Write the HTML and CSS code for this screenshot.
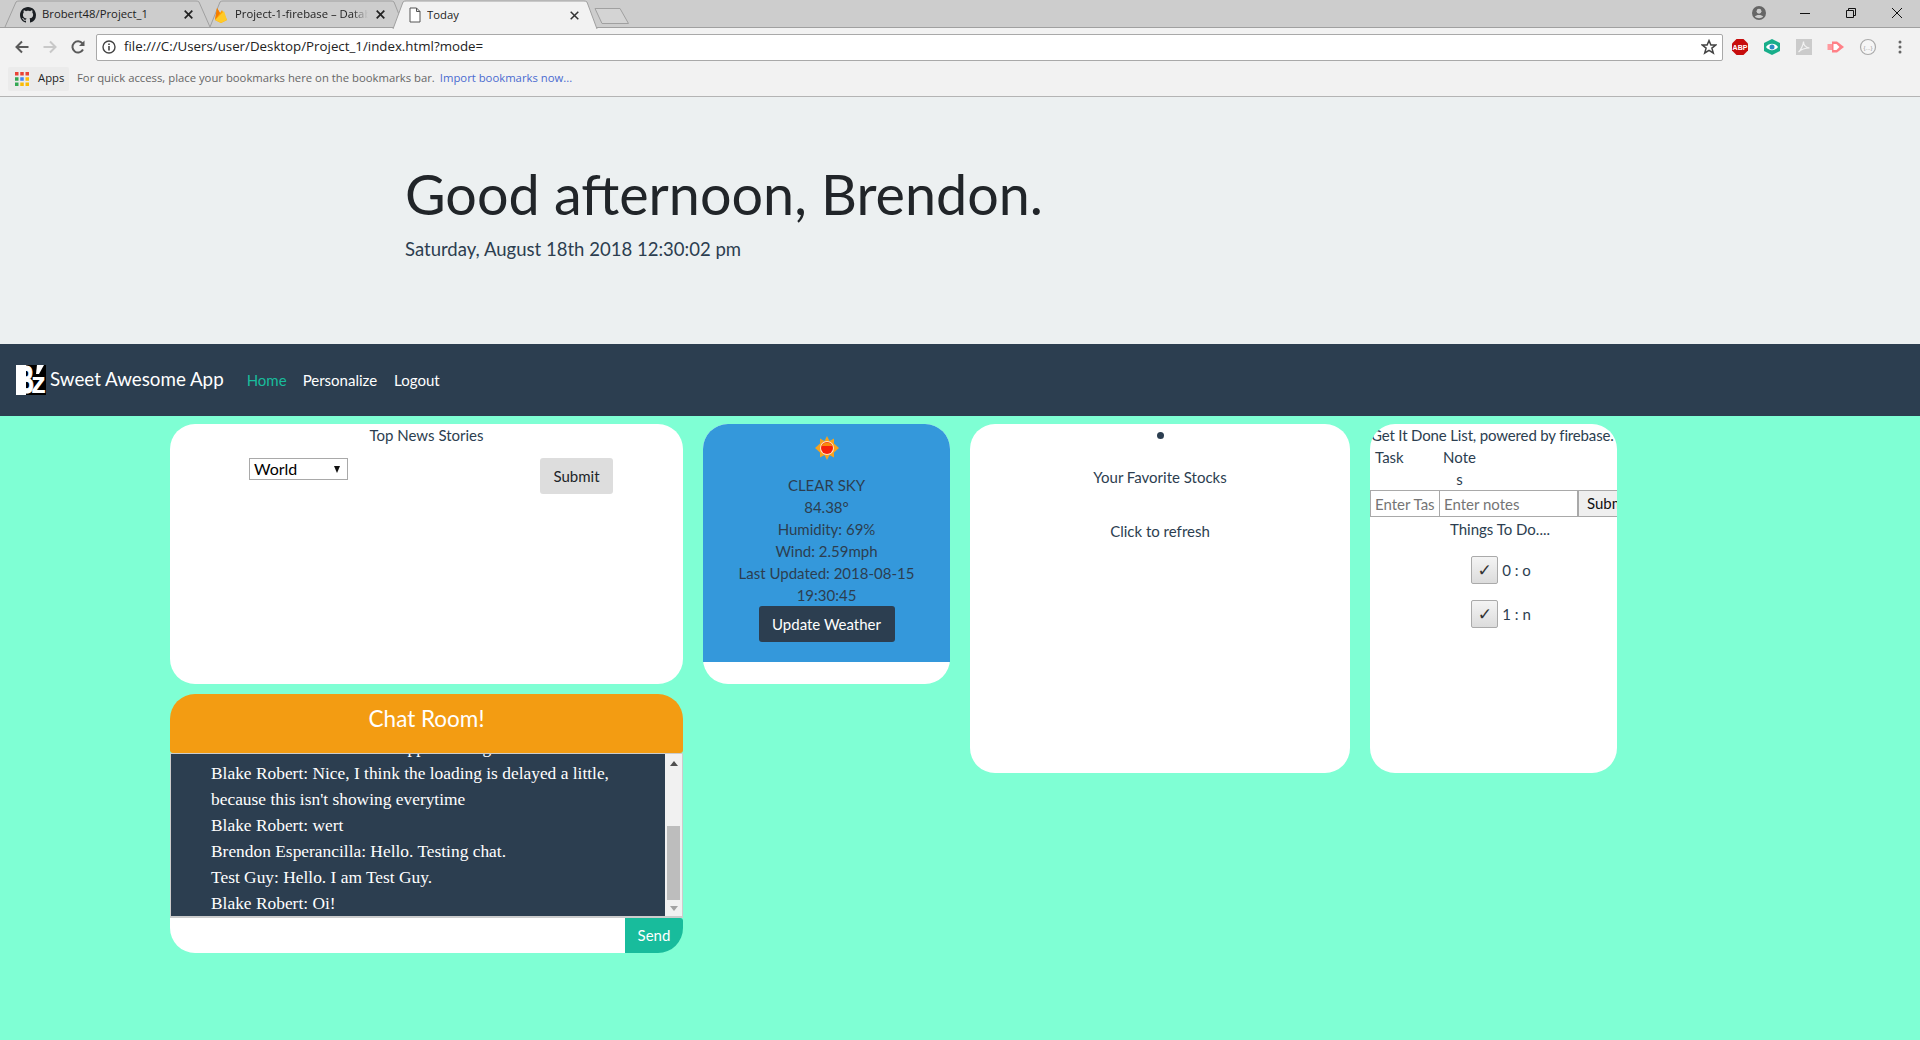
FILE: index.html
```html
<!DOCTYPE html>
<html lang="en">
<head>
  <meta charset="UTF-8">
  <meta name="viewport" content="width=device-width, initial-scale=1.0">
  <title>Today</title>
  <link rel="stylesheet" href="styles.css">
</head>
<body>
  <!-- browser chrome -->
  <div class="tabstrip">
    <div class="tab tab-first">
      <svg class="tab-shape" viewBox="0 0 205 28" preserveAspectRatio="none"><path d="M0 27 L11 2 Q12 1 14 1 L191 1 Q193 1 194 2 L205 27" fill="#cdcdcd" stroke="#a0a0a0"/></svg>
      <svg class="favicon" viewBox="0 0 16 16" width="16" height="16"><path fill="#1b1f23" d="M8 0C3.58 0 0 3.58 0 8c0 3.54 2.29 6.53 5.47 7.59.4.07.55-.17.55-.38 0-.19-.01-.82-.01-1.49-2.01.37-2.53-.49-2.69-.94-.09-.23-.48-.94-.82-1.13-.28-.15-.68-.52-.01-.53.63-.01 1.08.58 1.23.82.72 1.21 1.87.87 2.33.66.07-.52.28-.87.51-1.07-1.78-.2-3.64-.89-3.64-3.95 0-.87.31-1.59.82-2.15-.08-.2-.36-1.02.08-2.12 0 0 .67-.21 2.2.82.64-.18 1.32-.27 2-.27.68 0 1.36.09 2 .27 1.53-1.04 2.2-.82 2.2-.82.44 1.1.16 1.92.08 2.12.51.56.82 1.27.82 2.15 0 3.07-1.87 3.75-3.65 3.95.29.25.54.73.54 1.48 0 1.07-.01 1.93-.01 2.2 0 .21.15.46.55.38A8.013 8.013 0 0016 8c0-4.42-3.58-8-8-8z"/></svg>
      <span class="tab-title">Brobert48/Project_1</span>
      <svg class="tab-close" viewBox="0 0 9 9" width="9" height="9"><path d="M.7 .7L8.300 8.300M8.300 .7L.7 8.300" stroke="#222" stroke-width="1.700"/></svg>
    </div>
    <div class="tab tab-second">
      <svg class="tab-shape" viewBox="0 0 194 28" preserveAspectRatio="none"><path d="M0 27 L10 2 Q11 1 13 1 L181 1 Q183 1 184 2 L194 27" fill="#cdcdcd" stroke="#a0a0a0"/></svg>
      <svg class="favicon" viewBox="0 0 12 16" width="12" height="16"><path fill="#ffa000" d="M0 13 L2 1 L5 6 L7 3 L12 13 L6 16z"/><path fill="#f57c00" d="M0 13 L2 1 L5 6z"/><path fill="#ffca28" d="M0 13 L9 4 L12 13 L6 16z"/></svg>
      <span class="tab-title tab-title-fade">Project-1-firebase – Database</span>
      <svg class="tab-close" viewBox="0 0 9 9" width="9" height="9"><path d="M.7 .7L8.300 8.300M8.300 .7L.7 8.300" stroke="#222" stroke-width="1.700"/></svg>
    </div>
    <div class="tab tab-active">
      <svg class="tab-shape" viewBox="0 0 204 29" preserveAspectRatio="none"><path d="M0 29 L10 2 Q11 1 13 1 L191 1 Q193 1 194 2 L204 29" fill="#f2f2f2" stroke="#a0a0a0"/></svg>
      <svg class="favicon" viewBox="0 0 12 16" width="12" height="16"><path d="M1 1 H7.500 L11 4.500 V15 H1z M7.500 1 V4.500 H11" fill="#fff" stroke="#555" stroke-width="1"/></svg>
      <span class="tab-title">Today</span>
      <svg class="tab-close" viewBox="0 0 9 9" width="9" height="9"><path d="M.7 .7L8.300 8.300M8.300 .7L.7 8.300" stroke="#333" stroke-width="1.500"/></svg>
    </div>
    <svg class="newtab" viewBox="0 0 36 18" width="36" height="18"><path d="M1 1.500 H26 L34.500 16.500 H8z" fill="#d4d4d4" stroke="#a0a0a0" stroke-linejoin="round"/></svg>
    <div class="window-controls">
      <svg class="win-user" viewBox="0 0 16 16" width="14" height="14"><circle cx="8" cy="8" r="8" fill="#666"/><circle cx="8" cy="6" r="2.800" fill="#ccc"/><path d="M3.200 12.400 C4.400 9.400 11.600 9.400 12.800 12.400 C10.500 14.400 5.500 14.400 3.200 12.400z" fill="#ccc"/></svg>
      <svg viewBox="0 0 10 10" width="10" height="10"><path d="M0 5.500H10" stroke="#111" stroke-width="1"/></svg>
      <svg viewBox="0 0 10 10" width="10" height="10"><path d="M.5 2.500H7.500V9.500H.5z M2.500 2.500V.5H9.500V7.500H7.500" fill="none" stroke="#111"/></svg>
      <svg viewBox="0 0 10 10" width="10" height="10"><path d="M0 0L10 10M10 0L0 10" stroke="#111"/></svg>
    </div>
  </div>

  <div class="toolbar">
    <svg class="nav-icon" viewBox="0 0 16 16" width="16" height="16"><path d="M14.500 8H2.500M8 2.500L2.500 8L8 13.500" fill="none" stroke="#5a5a5a" stroke-width="2"/></svg>
    <svg class="nav-icon" viewBox="0 0 16 16" width="16" height="16"><path d="M1.500 8H13.500M8 2.500L13.500 8L8 13.500" fill="none" stroke="#c8c8c8" stroke-width="2"/></svg>
    <svg class="nav-icon" viewBox="0 0 16 16" width="16" height="16"><path d="M13 10.500A5.600 5.600 0 1 1 12.400 4.400" fill="none" stroke="#5a5a5a" stroke-width="2"/><path d="M14.500 1.500V7H9z" fill="#5a5a5a"/></svg>
    <div class="urlbar">
      <svg viewBox="0 0 14 14" width="14" height="14"><circle cx="7" cy="7" r="6" fill="none" stroke="#444" stroke-width="1.400"/><path d="M7 6V10.500M7 3.400V5" stroke="#444" stroke-width="1.600"/></svg>
      <span class="url">file:///C:/Users/user/Desktop/Project_1/index.html?mode=</span>
      <svg class="star" viewBox="0 0 16 16" width="16" height="16"><path d="M8 1.600L9.900 6H14.800L10.900 9.100L12.300 14L8 11.300L3.700 14L5.100 9.100L1.200 6H6.100z" fill="none" stroke="#444" stroke-width="1.500"/></svg>
    </div>
    <div class="extensions">
      <svg viewBox="0 0 18 18" width="18" height="18"><path d="M5.500 1H12.500L17 5.500V12.500L12.500 17H5.500L1 12.500V5.500z" fill="#c70d0d"/><text x="9" y="12" class="abp-text" text-anchor="middle">ABP</text></svg>
      <svg viewBox="0 0 18 18" width="18" height="18"><path d="M9 1L17 5V13L9 17L1 13V5z" fill="#17ae8a"/><path d="M3 9C6 4.800 12 4.800 15 9C12 13.200 6 13.200 3 9z" fill="#fff"/><circle cx="9" cy="9" r="2.500" fill="#2b8cc4"/></svg>
      <svg viewBox="0 0 18 18" width="18" height="18"><rect x="1" y="1" width="16" height="16" fill="#cbcbcb"/><path d="M3.500 14C6 12 8.500 6 8.500 3.500C8.500 7 10.500 9.500 14.500 10C11 10 6 11.500 3.500 14z" fill="none" stroke="#f2f2f2" stroke-width="1.200"/></svg>
      <svg viewBox="0 0 18 18" width="18" height="18"><rect x="0.500" y="6" width="5" height="6" fill="#ff9a9f"/><path d="M5 3.500H10L17 9L10 14.500H5z" fill="#ff8087"/><path d="M6.500 6H9.500L12.500 9L9.500 12H6.500z" fill="#fff"/></svg>
      <svg viewBox="0 0 18 18" width="18" height="18"><circle cx="9" cy="9" r="7.500" fill="#f6f6f6" stroke="#aaa" stroke-width="1.200"/><text x="9" y="11.500" class="ext-text" text-anchor="middle">{...}</text></svg>
      <svg class="menu-dots" viewBox="0 0 4 14" width="4" height="14"><circle cx="2" cy="2" r="1.500" fill="#666"/><circle cx="2" cy="7" r="1.500" fill="#666"/><circle cx="2" cy="12" r="1.500" fill="#666"/></svg>
    </div>
  </div>

  <div class="bookmarks">
    <div class="apps">
      <svg viewBox="0 0 12 12" width="14" height="14"><rect x="0" y="0" width="3" height="3" fill="#ea4335"/><rect x="4.500" y="0" width="3" height="3" fill="#ea4335"/><rect x="9" y="0" width="3" height="3" fill="#ea4335"/><rect x="0" y="4.500" width="3" height="3" fill="#34a853"/><rect x="4.500" y="4.500" width="3" height="3" fill="#4285f4"/><rect x="9" y="4.500" width="3" height="3" fill="#fbbc05"/><rect x="0" y="9" width="3" height="3" fill="#34a853"/><rect x="4.500" y="9" width="3" height="3" fill="#fbbc05"/><rect x="9" y="9" width="3" height="3" fill="#fbbc05"/></svg>
      <span>Apps</span>
    </div>
    <span class="bm-hint">For quick access, place your bookmarks here on the bookmarks bar.</span>
    <a class="bm-link">Import bookmarks now...</a>
  </div>

  <!-- page -->
  <header class="jumbotron">
    <h1>Good afternoon, Brendon.</h1>
    <p class="lead">Saturday, August 18th 2018 12:30:02 pm</p>
  </header>

  <nav class="navbar">
    <svg class="logo" viewBox="0 0 30 30" width="30" height="30">
      <rect width="30" height="30" fill="#000"/>
      <rect width="10" height="30" fill="#fff"/>
      <text x="1" y="28" class="logo-b" textLength="17" lengthAdjust="spacingAndGlyphs">B</text>
      <text x="15" y="28" class="logo-z" textLength="15" lengthAdjust="spacingAndGlyphs">z</text>
      <path d="M21 0H28L23 9H20z" fill="#fff"/>
    </svg>
    <a class="brand">Sweet Awesome App</a>
    <a class="nav-link active">Home</a>
    <a class="nav-link nav-wide">Personalize</a>
    <a class="nav-link">Logout</a>
  </nav>

  <main class="content">
    <div class="left-col">
      <section class="card news">
        <div class="card-title">Top News Stories</div>
        <div class="news-form">
          <div class="select-box">World</div>
          <button class="btn-grey">Submit</button>
        </div>
      </section>

      <section class="chat">
        <div class="chat-head">Chat Room!</div>
        <div class="chat-body">
          <div class="chat-messages">
            <p>Blake Robert: Now it did happen during</p>
            <p>Blake Robert: Nice, I think the loading is delayed a little, because this isn't showing everytime</p>
            <p>Blake Robert: wert</p>
            <p>Brendon Esperancilla: Hello. Testing chat.</p>
            <p>Test Guy: Hello. I am Test Guy.</p>
            <p>Blake Robert: Oi!</p>
          </div>
          <div class="scrollbar">
            <span class="arrow-up"></span>
            <span class="thumb"></span>
            <span class="arrow-down"></span>
          </div>
        </div>
        <div class="chat-input">
          <div class="chat-field"></div>
          <button class="btn-send">Send</button>
        </div>
      </section>
    </div>

    <section class="card weather">
      <div class="weather-box">
        <svg class="sun" viewBox="0 0 24 24" width="24" height="24">
          <path d="M12 0L14.500 5L19 2.500L19 7.500L24 12L19 16.500L19 21.500L14.500 19L12 24L9.500 19L5 21.500L5 16.500L0 12L5 7.500L5 2.500L9.500 5z" fill="#f6a21e"/>
          <circle cx="12" cy="12" r="7" fill="#fde6c8"/>
          <circle cx="12" cy="12" r="6" fill="#f5210a"/>
          <path d="M6.500 10A6 6 0 0 1 17.500 10z" fill="#f98a0c"/>
        </svg>
        <p>CLEAR SKY</p>
        <p>84.38°</p>
        <p>Humidity: 69%</p>
        <p>Wind: 2.59mph</p>
        <p>Last Updated: 2018-08-15 19:30:45</p>
        <button class="btn-dark">Update Weather</button>
      </div>
    </section>

    <section class="card stocks">
      <div class="stock-dot"></div>
      <div class="stock-title">Your Favorite Stocks</div>
      <div class="stock-refresh">Click to refresh</div>
    </section>

    <section class="card todo">
      <div class="todo-title">Get It Done List, powered by firebase.</div>
      <div class="todo-labels">
        <span class="label-task">Task</span>
        <span class="label-note">Note s</span>
      </div>
      <div class="todo-form">
        <input class="input-task" type="text" placeholder="Enter Task">
        <input class="input-notes" type="text" placeholder="Enter notes">
        <button class="btn-todo">Submit</button>
      </div>
      <div class="todo-head">Things To Do....</div>
      <div class="todo-item"><button class="check">&#10003;</button><span>0 : o</span></div>
      <div class="todo-item"><button class="check">&#10003;</button><span>1 : n</span></div>
    </section>
  </main>
</body>
</html>
```

FILE: styles.css
```css
* {
  box-sizing: border-box;
}

html,
body {
  height: 100%;
}

body {
  margin: 0;
  overflow: hidden;
  font-family: Lato, "Open Sans", sans-serif;
  font-size: 15px;
  line-height: 1.5;
  color: #2c3e50;
  background-color: #7fffd4;
}

p {
  margin: 0;
}

/* browser chrome */
.tabstrip {
  display: flex;
  align-items: flex-start;
  height: 28px;
  padding-left: 5px;
  background-color: #cdcdcd;
  border-bottom: 1px solid #a0a0a0;
  font-family: "Open Sans", sans-serif;
  font-size: 11.3px;
  color: #222;
}

.tab {
  position: relative;
  display: flex;
  align-items: center;
  height: 28px;
  padding-top: 1px;
}

.tab-shape {
  position: absolute;
  top: 0;
  left: 0;
  width: 100%;
  height: 100%;
  overflow: visible;
}

.tab > .favicon,
.tab > span,
.tab > .tab-close {
  position: relative;
}

.tab-first {
  width: 205px;
  padding-left: 15px;
}

.tab-second {
  width: 194px;
  padding-left: 5px;
}

.tab-active {
  width: 204px;
  height: 29px;
  margin-left: -11px;
  padding-left: 16px;
  z-index: 1;
}

.tab-title {
  margin-left: 6px;
  flex: 1;
  overflow: hidden;
  white-space: nowrap;
}

.tab-second .tab-title {
  margin-left: 8px;
}

.tab-title-fade {
  -webkit-mask-image: linear-gradient(to right, #000 88%, transparent);
  mask-image: linear-gradient(to right, #000 88%, transparent);
}

.tab-close {
  flex-shrink: 0;
  margin-right: 17px;
}

.tab-second .tab-close {
  margin-left: 8px;
  margin-right: 19px;
}

.tab-active .tab-close {
  margin-right: 18px;
}

.newtab {
  margin-left: -3px;
  margin-top: 7px;
}

.window-controls {
  display: flex;
  align-items: center;
  gap: 36px;
  margin-left: auto;
  padding: 6px 18px 0 0;
}

.win-user {
  margin-right: -2px;
}

.toolbar {
  display: flex;
  align-items: center;
  height: 34px;
  padding: 4px 0 0 14px;
  background-color: #f2f2f2;
}

.nav-icon {
  margin-right: 12px;
}

.urlbar {
  display: flex;
  align-items: center;
  width: 1627px;
  height: 27px;
  margin-left: -2px;
  padding: 0 5px;
  background-color: #fff;
  border: 1px solid #a9a9a9;
  border-radius: 2px;
  font-family: "Open Sans", sans-serif;
  font-size: 13.3px;
  color: #222;
}

.url {
  margin-left: 8px;
  flex: 1;
}

.extensions {
  display: flex;
  align-items: center;
  gap: 14px;
  margin-left: 8px;
}

.abp-text {
  font-family: "Liberation Sans", sans-serif;
  font-size: 7px;
  font-weight: bold;
  fill: #fff;
}

.ext-text {
  font-family: "Liberation Sans", sans-serif;
  font-size: 6px;
  fill: #999;
}

.menu-dots {
  margin-left: 7px;
}

.bookmarks {
  display: flex;
  align-items: center;
  height: 35px;
  padding: 0 0 1px 8px;
  background-color: #f2f2f2;
  border-bottom: 1px solid #b4b4b4;
  font-family: "Open Sans", sans-serif;
  font-size: 11.3px;
}

.apps {
  display: flex;
  align-items: center;
  gap: 9px;
  width: 61px;
  height: 24px;
  padding-left: 7px;
  color: #222;
  background-color: #ebebeb;
  border-radius: 2px;
}

.bm-hint {
  margin-left: 8px;
  color: #666;
}

.bm-link {
  margin-left: 5px;
  color: #4a6ad0;
}

/* jumbotron */
.jumbotron {
  height: 247px;
  padding: 64px 0 0 405px;
  background-color: #ecf0f1;
}

.jumbotron h1 {
  margin: 0;
  font-size: 55.7px;
  font-weight: 400;
  line-height: 1.2;
  color: #212529;
}

.lead {
  margin-top: 8px;
  font-size: 18.55px;
  color: #2c3e50;
}

/* navbar */
.navbar {
  display: flex;
  align-items: center;
  height: 72px;
  padding-left: 16px;
  background-color: #2c3e50;
}

.logo {
  flex-shrink: 0;
}

.logo-b {
  font-family: "Liberation Sans", sans-serif;
  font-size: 38px;
  font-weight: bold;
  fill: #fff;
  stroke: #fff;
}

.logo-z {
  font-family: "Liberation Sans", sans-serif;
  font-size: 30px;
  font-weight: bold;
  fill: #fff;
}

.brand {
  margin: -2px 23px 0 4px;
  font-size: 18.75px;
  color: #fff;
}

.nav-link {
  margin-right: 16px;
  color: #fff;
}

.nav-link.active {
  color: #18bc9c;
}

.nav-wide {
  margin-right: 17px;
}

/* cards */
.content {
  display: flex;
  align-items: flex-start;
  gap: 20px;
  padding: 8px 0 0 170px;
}

.left-col {
  display: flex;
  flex-direction: column;
  gap: 10px;
  width: 513px;
}

.card {
  background-color: #fff;
  border-radius: 25px;
  text-align: center;
}

.card-title {
  line-height: 22px;
}

.news {
  height: 260px;
}

.news-form {
  display: flex;
  justify-content: space-between;
  align-items: flex-start;
  padding: 12px 70px 0 79px;
}

.select-box {
  position: relative;
  width: 99px;
  height: 22px;
  padding-left: 4px;
  border: 1px solid #a9a9a9;
  font-size: 16px;
  line-height: 20px;
  color: #000;
  text-align: left;
}

.select-box::after {
  content: "";
  position: absolute;
  top: 7px;
  right: 7px;
  border-top: 7px solid #111;
  border-left: 3px solid transparent;
  border-right: 3px solid transparent;
}

.btn-grey {
  width: 73px;
  height: 36px;
  padding: 0;
  border: none;
  border-radius: 3px;
  background-color: #ddd;
  color: #212529;
  font: inherit;
}

.weather {
  width: 247px;
  height: 260px;
}

.weather-box {
  height: 238px;
  padding-top: 12px;
  background-color: #3498db;
  border-radius: 25px 25px 0 0;
}

.sun {
  display: block;
  margin: 0 auto 14px;
}

.weather-box p {
  line-height: 22px;
  padding: 0 30px;
}

.btn-dark {
  width: 136px;
  height: 36px;
  padding: 0;
  border: none;
  border-radius: 3px;
  background-color: #2c3e50;
  color: #fff;
  font: inherit;
}

.stocks {
  width: 380px;
  height: 349px;
  padding-top: 8px;
}

.stock-dot {
  width: 7px;
  height: 7px;
  margin: 0 auto;
  background-color: #2c3e50;
  border-radius: 50%;
}

.stock-title {
  margin-top: 27px;
}

.stock-refresh {
  margin-top: 31px;
}

.todo {
  width: 247px;
  height: 349px;
  overflow: hidden;
}

.todo-title {
  padding-left: 1px;
  white-space: nowrap;
  text-align: left;
  letter-spacing: -0.15px;
  line-height: 22px;
  color: #2c3e50;
}

.todo-labels {
  display: flex;
  height: 44px;
  text-align: left;
  line-height: 22px;
  padding-left: 5px;
}

.label-task {
  width: 68px;
}

.label-note {
  width: 33px;
  text-align: center;
}

.todo-form {
  display: flex;
  height: 27px;
}

.todo-form input {
  flex: 0 0 auto;
  height: 27px;
  padding: 0 4px;
  border: 1px solid #a9a9a9;
  font: inherit;
  color: #555;
  min-width: 0;
}

.todo-form input::placeholder {
  color: #757575;
  opacity: 1;
}

.input-task {
  width: 70px;
}

.input-notes {
  width: 138px;
  border-left: none !important;
}

.btn-todo {
  flex: 0 0 60px;
  padding: 0 0 0 8px;
  text-align: left;
  border: 1px solid #a9a9a9;
  background-color: #efefef;
  color: #111;
  font: inherit;
}

.todo-head {
  margin-top: 1px;
  padding-left: 13px;
  line-height: 23px;
}

.todo-item {
  display: flex;
  align-items: center;
  justify-content: center;
  gap: 4px;
  height: 28px;
  padding-left: 15px;
  margin-top: 15px;
}

.todo-item + .todo-item {
  margin-top: 16px;
}

.check {
  width: 27px;
  height: 28px;
  padding: 0;
  border: 1px solid #aaa;
  border-radius: 2px;
  background: linear-gradient(#f4f4f4, #dcdcdc);
  color: #333;
  font-family: "DejaVu Sans", sans-serif;
  font-size: 17px;
  line-height: 1;
}

/* chat */
.chat {
  height: 259px;
}

.chat-head {
  height: 59px;
  background-color: #f39c12;
  border-radius: 25px 25px 3px 3px;
  color: #fff;
  font-size: 22.5px;
  line-height: 50px;
  text-align: center;
}

.chat-body {
  display: flex;
  height: 165px;
  background-color: #2c3e50;
  border: 1px solid #ccc;
  border-bottom-width: 2px;
}

.chat-messages {
  flex: 1;
  display: flex;
  flex-direction: column;
  justify-content: flex-end;
  padding: 0 40px;
  overflow: hidden;
  font-family: Georgia, "Liberation Serif", serif;
  font-size: 17.4px;
  line-height: 26px;
  color: #fff;
}

.scrollbar {
  display: flex;
  flex-direction: column;
  align-items: center;
  width: 17px;
  background-color: #f1f1f1;
}

.arrow-up {
  margin-top: 7px;
  border-bottom: 5px solid #505050;
  border-left: 4px solid transparent;
  border-right: 4px solid transparent;
}

.thumb {
  width: 13px;
  height: 74px;
  margin-top: 60px;
  background-color: #bdbdbd;
}

.arrow-down {
  margin-top: 6px;
  border-top: 5px solid #a3a3a3;
  border-left: 4px solid transparent;
  border-right: 4px solid transparent;
}

.chat-input {
  display: flex;
  height: 35px;
}

.chat-field {
  flex: 1;
  background-color: #fff;
  border-radius: 0 0 0 25px;
}

.btn-send {
  width: 58px;
  padding: 0;
  border: none;
  border-radius: 0 3px 25px 0;
  background-color: #18bc9c;
  color: #fff;
  font: inherit;
}
```
